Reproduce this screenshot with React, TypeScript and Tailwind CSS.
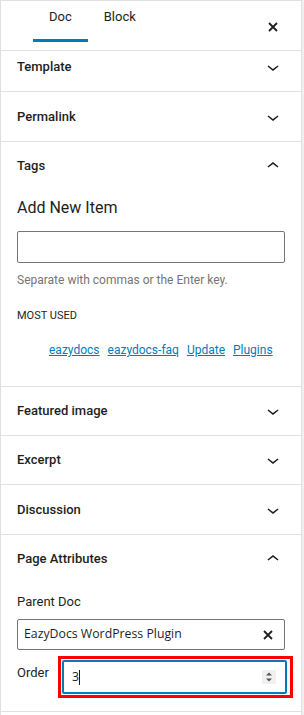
import React from "react";

const chevronDown = "M17.5 11.6L12 16l-5.5-4.4.9-1.2L12 14l4.6-3.6 1 1.2z";
const chevronUp = "M6.5 12.4L12 8l5.5 4.4-.9 1.2L12 10l-4.6 3.6-1-1.2z";

function Chevron({ up }: { up?: boolean }) {
  return (
    <svg width="24" height="24" viewBox="0 0 24 24" className="shrink-0 fill-[#1e1e1e]">
      <path d={up ? chevronUp : chevronDown} />
    </svg>
  );
}

function Cross() {
  return (
    <svg width="10" height="10" viewBox="0 0 10 10" className="shrink-0">
      <path d="M1 1l8 8M9 1l-8 8" stroke="#1e1e1e" strokeWidth="1.8" />
    </svg>
  );
}

function Section({ title, h = "h-[49px]" }: { title: string; h?: string }) {
  return (
    <div className={`flex ${h} items-center justify-between border-b border-[#e0e0e0] px-4`}>
      <span className="text-[13px] font-medium leading-4 text-[#1e1e1e]">{title}</span>
      <Chevron />
    </div>
  );
}

export default function App() {
  const tags = ["eazydocs", "eazydocs-faq", "Update", "Plugins"];

  return (
    <div className="flex h-[715px] w-[304px] overflow-hidden bg-[#f0f0f0] font-['Roboto',sans-serif]">
      <div className="w-[302px] shrink-0 border-x border-t border-[#e0e0e0] bg-white">
        {/* header tabs */}
        <div className="flex h-[50px] border-b border-[#e0e0e0] pl-[32px] pr-4">
          <div className="flex flex-col px-4 pt-[8px]">
            <span className="text-[13px] leading-4 text-[#1e1e1e]">Doc</span>
            <span className="-mx-4 mt-[14px] h-[3px] bg-[#007cba]" />
          </div>
          <div className="flex flex-col px-4 pt-[8px]">
            <span className="text-[13px] leading-4 text-[#1e1e1e]">Block</span>
          </div>
          <div className="ml-auto mt-[14px] flex h-6 w-6 items-center justify-center">
            <Cross />
          </div>
        </div>

        {/* template, partly under the header */}
        <div className="flex h-[41px] items-start justify-between border-b border-[#e0e0e0] px-4 pt-[4px]">
          <div className="flex h-6 items-center">
            <span className="text-[13px] font-medium leading-4 text-[#1e1e1e]">Template</span>
          </div>
          <Chevron />
        </div>

        <Section title="Permalink" h="h-[50px]" />

        {/* tags */}
        <div className="border-b border-[#e0e0e0] px-4 pb-[26px] pt-[12px]">
          <div className="flex h-6 items-center justify-between">
            <span className="text-[13px] font-medium leading-4 text-[#1e1e1e]">Tags</span>
            <Chevron up />
          </div>
          <div className="mt-[20px] text-[16px] leading-5 text-[#1e1e1e]">Add New Item</div>
          <div className="mt-[13px] h-[32px] rounded-[2px] border border-[#757575]" />
          <p className="mt-[9px] text-[12px] leading-4 text-[#757575]">
            Separate with commas or the Enter key.
          </p>
          <div className="mt-[20px] text-[11px] uppercase leading-4 text-[#1e1e1e]">Most used</div>
          <div className="mt-[16px] flex gap-[8px] whitespace-nowrap pl-[32px]">
            {tags.map((t) => (
              <a key={t} className="text-[12px] leading-5 text-[#007cba] underline">
                {t}
              </a>
            ))}
          </div>
        </div>

        <Section title="Featured image" />
        <Section title="Excerpt" h="h-[49px]" />
        <Section title="Discussion" h="h-[50px]" />

        {/* page attributes */}
        <div className="border-b border-[#e0e0e0] px-4 pb-[13px] pt-[12px]">
          <div className="flex h-6 items-center justify-between">
            <span className="text-[13px] font-medium leading-4 text-[#1e1e1e]">Page Attributes</span>
            <Chevron up />
          </div>
          <div className="mt-[23px] text-[13px] leading-4 text-[#1e1e1e]">Parent Doc</div>
          <div className="mt-[9px] flex h-[31px] items-center rounded-[2px] border border-[#757575] pl-[6px] pr-[11px]">
            <span className="font-['Open_Sans',sans-serif] text-[12.3px] text-[#1e1e1e]">
              EazyDocs WordPress Plugin
            </span>
            <span className="ml-auto">
              <Cross />
            </span>
          </div>
          <div className="mt-[6px] flex items-start">
            <span className="mt-[9px] w-[41px] shrink-0 text-[13px] leading-4 text-[#1e1e1e]">Order</span>
            <div className="h-[42px] w-[235px] shrink-0 border-[3px] border-[#ff0000] p-px">
              <div className="flex h-[34px] w-[225px] items-center rounded-[2px] border-2 border-[#007cba] pl-[8px] pr-[9px]">
                <span className="font-['Open_Sans',sans-serif] text-[12.3px] text-[#1e1e1e]">3</span>
                <span className="h-[15px] w-px bg-[#1e1e1e]" />
                <span className="ml-auto flex h-[14px] w-[14px] bg-[#f0f0f0]">
                  <svg width="14" height="14" viewBox="0 0 14 14" className="fill-[#555]">
                    <polygon points="4,5.5 7,2.5 10,5.5" />
                    <polygon points="4,8.5 10,8.5 7,11.5" />
                  </svg>
                </span>
              </div>
            </div>
          </div>
        </div>
        <div className="h-6" />
      </div>
    </div>
  );
}
